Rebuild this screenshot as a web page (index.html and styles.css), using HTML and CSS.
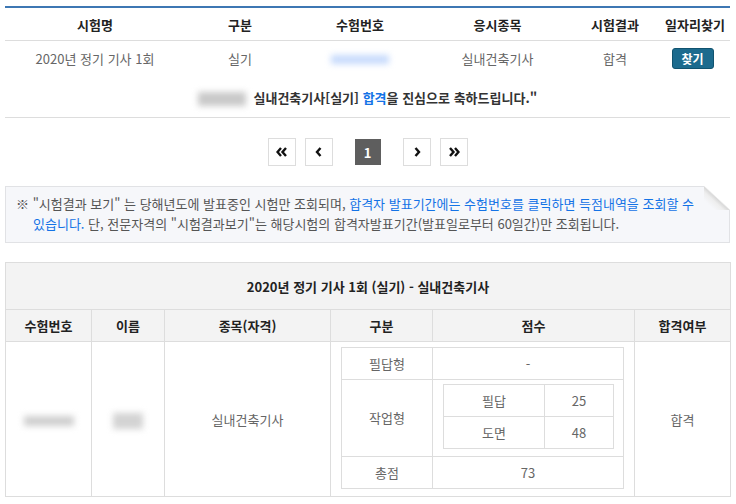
FILE: index.html
```html
<!DOCTYPE html>
<html lang="ko">
<head>
    <meta charset="UTF-8">
    <meta name="viewport" content="width=device-width, initial-scale=1.0">
    <title>시험결과 보기</title>
    <link rel="stylesheet" href="styles.css">
</head>
<body>
<div class="wrap">

    <!-- 시험 목록 -->
    <table class="exam-table">
        <colgroup>
            <col style="width:180px"><col style="width:110px"><col style="width:130px">
            <col style="width:145px"><col style="width:90px"><col style="width:70px">
        </colgroup>
        <tr>
            <th>시험명</th>
            <th>구분</th>
            <th>수험번호</th>
            <th>응시종목</th>
            <th>시험결과</th>
            <th>일자리찾기</th>
        </tr>
        <tr class="exam-row">
            <td>2020년 정기 기사 1회</td>
            <td>실기</td>
            <td><span class="blur blur-num"></span></td>
            <td>실내건축기사</td>
            <td>합격</td>
            <td><button class="btn-find">찾기</button></td>
        </tr>
        <tr class="congrats">
            <td colspan="6"><span class="blur blur-name"></span> 실내건축기사[실기] <span class="blue">합격</span>을 진심으로 축하드립니다."</td>
        </tr>
    </table>

    <!-- 페이지 -->
    <div class="pager">
        <a class="page-btn"><svg width="12" height="10" viewBox="0 0 12 10"><polyline points="5,1 1.5,5 5,9" /><polyline points="10,1 6.5,5 10,9" /></svg></a>
        <a class="page-btn"><svg width="8" height="10" viewBox="0 0 8 10"><polyline points="5.5,1 2,5 5.5,9" /></svg></a>
        <span class="page-cur">1</span>
        <a class="page-btn"><svg width="8" height="10" viewBox="0 0 8 10"><polyline points="2.5,1 6,5 2.5,9" /></svg></a>
        <a class="page-btn"><svg width="12" height="10" viewBox="0 0 12 10"><polyline points="2,1 5.5,5 2,9" /><polyline points="7,1 10.5,5 7,9" /></svg></a>
    </div>

    <!-- 안내 -->
    <div class="notice">
        ※ "시험결과 보기" 는 당해년도에 발표중인 시험만 조회되며, <span class="blue">합격자 발표기간에는 수험번호를 클릭하면 득점내역을 조회할 수 있습니다.</span> 단, 전문자격의 "시험결과보기"는 해당시험의 합격자발표기간(발표일로부터 60일간)만 조회됩니다.
    </div>

    <!-- 득점 내역 -->
    <table class="score-table">
        <colgroup>
            <col style="width:86px"><col style="width:73px"><col style="width:166px">
            <col style="width:102px"><col style="width:202px"><col style="width:96px">
        </colgroup>
        <tr class="title-row">
            <th colspan="6">2020년 정기 기사 1회 (실기) - 실내건축기사</th>
        </tr>
        <tr class="head-row">
            <th>수험번호</th>
            <th>이름</th>
            <th>종목(자격)</th>
            <th>구분</th>
            <th>점수</th>
            <th>합격여부</th>
        </tr>
        <tr class="body-row">
            <td><span class="blur blur-id"></span></td>
            <td><span class="blur blur-person"></span></td>
            <td>실내건축기사</td>
            <td colspan="2" class="inner-cell">
                <table class="inner-table">
                    <colgroup><col style="width:91px"><col></colgroup>
                    <tr class="row-s"><td>필답형</td><td>-</td></tr>
                    <tr>
                        <td>작업형</td>
                        <td class="inner-cell2">
                            <table class="inner-table2">
                                <colgroup><col style="width:101px"><col></colgroup>
                                <tr><td>필답</td><td>25</td></tr>
                                <tr><td>도면</td><td>48</td></tr>
                            </table>
                        </td>
                    </tr>
                    <tr class="row-s"><td>총점</td><td>73</td></tr>
                </table>
            </td>
            <td>합격</td>
        </tr>
    </table>

</div>
</body>
</html>
```

FILE: styles.css
```css
body {
    margin: 0;
    font-family: "Noto Sans CJK KR", "Noto Sans", sans-serif;
    font-size: 13px;
    color: #666;
    background-color: #fff;
}

.wrap {
    padding: 6px 6px 0 5px;
}

.blue {
    color: #1473e6;
}

/* 흐림 처리 */
.blur {
    display: inline-block;
    vertical-align: middle;
    filter: blur(3px);
}

.blur-num {
    width: 58px;
    height: 9px;
    background-color: #c6dafc;
}

.blur-name {
    width: 48px;
    height: 14px;
    background-color: #c9c9c9;
    margin-right: 4px;
}

.blur-id {
    width: 50px;
    height: 10px;
    background-color: #cfcfcf;
}

.blur-person {
    width: 30px;
    height: 16px;
    background-color: #d3d3d3;
}

/* 시험 목록 */
.exam-table {
    width: 100%;
    border-collapse: collapse;
    table-layout: fixed;
    border-top: 2px solid #3d77b3;
}

.exam-table th {
    height: 32px;
    padding: 0;
    font-size: 13px;
    font-weight: bold;
    color: #222;
    border-bottom: 1px solid #ddd;
}

.exam-table td {
    padding: 0;
    text-align: center;
}

.exam-row td {
    height: 34px;
}

.congrats td {
    height: 40px;
    padding-top: 2px;
    font-weight: bold;
    color: #333;
    border-bottom: 1px solid #ddd;
}

.btn-find {
    width: 42px;
    height: 21px;
    padding: 0;
    font-family: inherit;
    font-size: 12px;
    font-weight: bold;
    color: #fff;
    background-color: #1c6b8e;
    border: 1px solid #11536f;
    border-radius: 3px;
    margin-left: -5px;
}

/* 페이지 */
.pager {
    display: flex;
    justify-content: center;
    align-items: center;
    gap: 9px;
    margin: 20px 0 20px;
}

.page-btn {
    display: flex;
    align-items: center;
    justify-content: center;
    width: 26px;
    height: 26px;
    border: 1px solid #ddd;
    background-color: #fff;
}

.page-btn svg polyline {
    fill: none;
    stroke: #111;
    stroke-width: 2.4;
}

.page-cur {
    display: flex;
    align-items: center;
    justify-content: center;
    width: 26px;
    height: 26px;
    margin: 0 13px;
    background-color: #5e5e5e;
    color: #fff;
    font-weight: bold;
}

/* 안내 */
.notice {
    position: relative;
    margin-top: 20px;
    background-color: #f6f7fa;
    border: 1px solid #e1e2e5;
    padding: 7px 32px 8px 27px;
    text-indent: -17px;
    line-height: 20px;
    color: #555;
}

.notice::after {
    content: "";
    position: absolute;
    top: -1px;
    right: -1px;
    width: 26px;
    height: 24px;
    background: linear-gradient(to bottom left, #fff 48%, #d9d9d9 52%, #eeeeee 62%, #f6f7fa 80%);
}

/* 득점 내역 */
.score-table {
    width: 100%;
    margin-top: 19px;
    border-collapse: collapse;
    table-layout: fixed;
    border: 1px solid #ddd;
}

.score-table th {
    padding: 0;
    font-size: 13px;
    font-weight: bold;
    color: #222;
    background-color: #f3f3f3;
    border: 1px solid #ddd;
}

.title-row th {
    height: 46px;
}

.head-row th {
    height: 31px;
}

.score-table td {
    padding: 0;
    text-align: center;
    border: 1px solid #ddd;
}

.body-row {
    height: 155px;
}

.score-table td.inner-cell {
    padding: 4px 10px 7px 10px;
}

.inner-table {
    width: 100%;
    border-collapse: collapse;
    table-layout: fixed;
}

.inner-table .row-s td {
    height: 31px;
}

.inner-table td.inner-cell2 {
    padding: 4px 9px 7px 10px;
}

.inner-table2 {
    width: 100%;
    border-collapse: collapse;
    table-layout: fixed;
}

.inner-table2 td {
    height: 31px;
}
```
